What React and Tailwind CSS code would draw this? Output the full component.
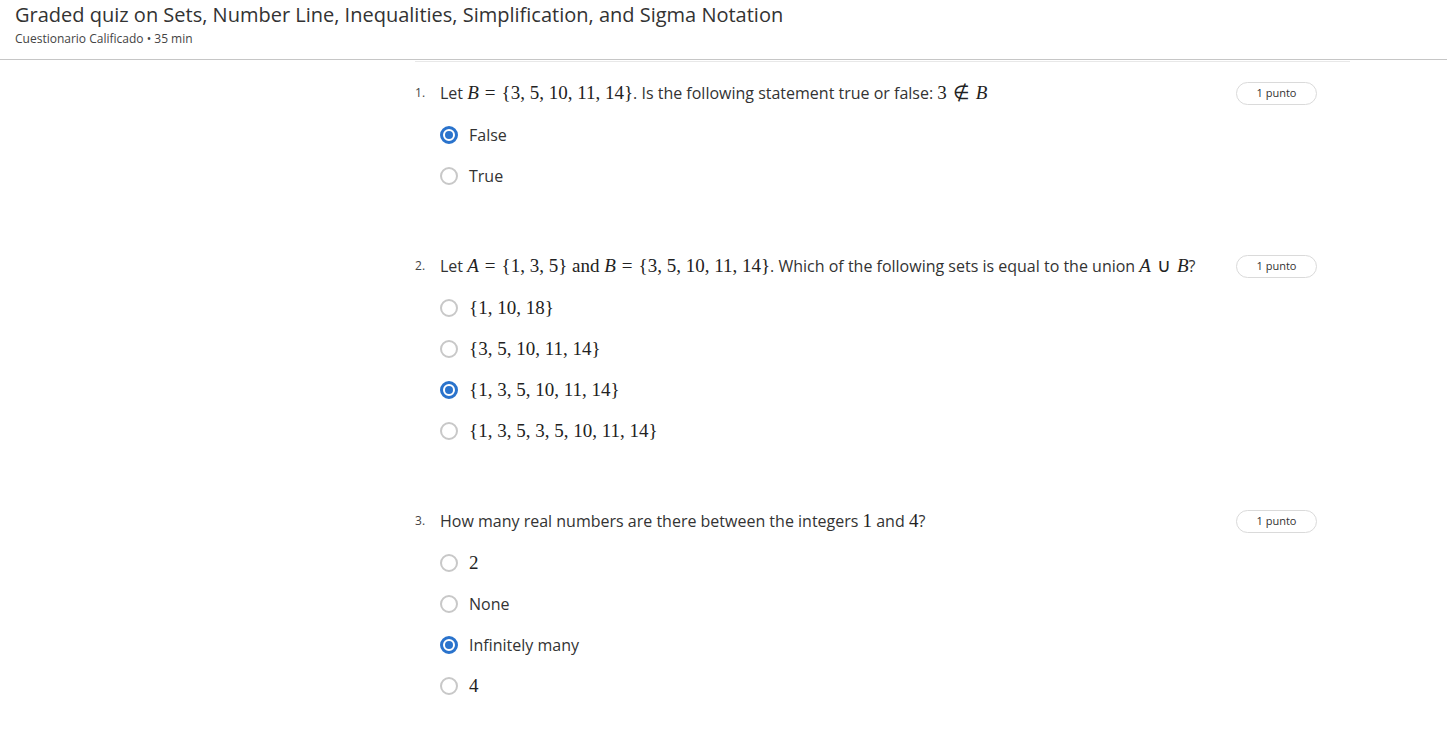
import React from 'react';

const M = ({ children }) => (
  <span className="font-['Liberation_Serif',serif] text-[19px] leading-[20px] text-[#222]">{children}</span>
);
const V = ({ children }) => <i className="font-['Liberation_Serif',serif]">{children}</i>;
const Eq = ({ children }) => <span className="inline-block px-[6px]">{children}</span>;

function Radio({ checked }) {
  return checked ? (
    <span className="flex h-[18px] w-[18px] shrink-0 items-center justify-center rounded-full border-[3px] border-[#2a73cc]">
      <span className="h-[8px] w-[8px] rounded-full bg-[#2a73cc]" />
    </span>
  ) : (
    <span className="h-[18px] w-[18px] shrink-0 rounded-full border-2 border-[#c8c8c8]" />
  );
}

function Question({ num, text, options, answer }) {
  return (
    <div className="mb-[66px]">
      <div className="flex h-[24px] items-center">
        <span className="w-[25px] text-[12px] text-[#444]">{num}.</span>
        <div className="flex-1 text-[16px] text-[#333]">{text}</div>
        <span className="ml-4 flex h-[23px] w-[81px] items-center justify-center rounded-full border border-[#dadada] text-[11px] text-[#333]">1 punto</span>
      </div>
      <div className="mt-[18px] flex flex-col gap-[17px] pl-[25px]">
        {options.map((o, i) => (
          <label key={i} className="flex h-[24px] items-center gap-[11px] text-[16px] text-[#333]">
            <Radio checked={i === answer} />
            <span>{o}</span>
          </label>
        ))}
      </div>
    </div>
  );
}

export default function App() {
  const questions = [
    {
      num: 1,
      text: <>Let <M><V>B</V><Eq>=</Eq>{'{'}3, 5, 10, 11, 14{'}'}</M>. Is the following statement true or false: <M>3<Eq>∉</Eq><V>B</V></M></>,
      options: ['False', 'True'],
      answer: 0,
    },
    {
      num: 2,
      text: <>Let <M><V>A</V><Eq>=</Eq>{'{'}1, 3, 5{'}'} and <V>B</V><Eq>=</Eq>{'{'}3, 5, 10, 11, 14{'}'}</M>. Which of the following sets is equal to the union <M><V>A</V><Eq>∪</Eq><V>B</V></M>?</>,
      options: [
        <M>{'{'}1, 10, 18{'}'}</M>,
        <M>{'{'}3, 5, 10, 11, 14{'}'}</M>,
        <M>{'{'}1, 3, 5, 10, 11, 14{'}'}</M>,
        <M>{'{'}1, 3, 5, 3, 5, 10, 11, 14{'}'}</M>,
      ],
      answer: 2,
    },
    {
      num: 3,
      text: <>How many real numbers are there between the integers <M>1</M> and <M>4</M>?</>,
      options: [<M>2</M>, 'None', 'Infinitely many', <M>4</M>],
      answer: 2,
    },
  ];

  return (
    <div className="min-h-[729px] bg-white font-['Open_Sans',sans-serif]">
      <div className="h-[60px] border-b border-[#c6c6c6] px-[15px] pt-[2px]">
        <h1 className="text-[20px] leading-[26px] text-[#333]">Graded quiz on Sets, Number Line, Inequalities, Simplification, and Sigma Notation</h1>
        <p className="mt-[2px] text-[12px] text-[#444]">Cuestionario Calificado • 35 min</p>
      </div>
      <div className="ml-[415px] w-[935px] border-t border-[#e8e8e8] mt-[1px] pr-[33px] pt-[19px]">
        {questions.map(q => (
          <Question key={q.num} {...q} />
        ))}
      </div>
    </div>
  );
}
